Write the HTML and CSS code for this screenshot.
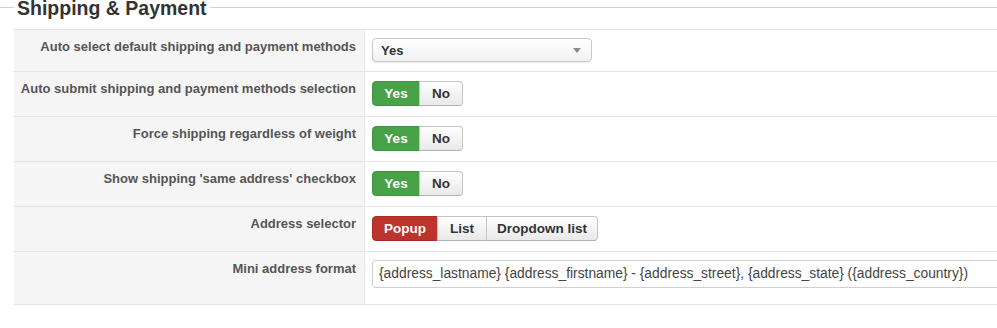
FILE: index.html
```html
<!DOCTYPE html>
<html>
<head>
<meta charset="utf-8">
<link rel="stylesheet" href="styles.css">
</head>
<body>
<div class="fieldset">
  <div class="legend-row">
    <div class="legend-line short"></div>
    <div class="legend">Shipping &amp; Payment</div>
    <div class="legend-line grow"></div>
  </div>
  <div class="form">
    <div class="row r1">
      <div class="label">Auto select default shipping and payment methods</div>
      <div class="value">
        <div class="select"><span>Yes</span><span class="caret"></span></div>
      </div>
    </div>
    <div class="row">
      <div class="label">Auto submit shipping and payment methods selection</div>
      <div class="value">
        <div class="btn-group"><span class="btn green w-yes">Yes</span><span class="btn w-no">No</span></div>
      </div>
    </div>
    <div class="row">
      <div class="label">Force shipping regardless of weight</div>
      <div class="value">
        <div class="btn-group"><span class="btn green w-yes">Yes</span><span class="btn w-no">No</span></div>
      </div>
    </div>
    <div class="row">
      <div class="label">Show shipping 'same address' checkbox</div>
      <div class="value">
        <div class="btn-group"><span class="btn green w-yes">Yes</span><span class="btn w-no">No</span></div>
      </div>
    </div>
    <div class="row">
      <div class="label">Address selector</div>
      <div class="value">
        <div class="btn-group"><span class="btn red w-popup">Popup</span><span class="btn w-list">List</span><span class="btn w-dd">Dropdown list</span></div>
      </div>
    </div>
    <div class="row r6">
      <div class="label">Mini address format</div>
      <div class="value">
        <div class="input">{address_lastname} {address_firstname} - {address_street}, {address_state} ({address_country})</div>
      </div>
    </div>
  </div>
</div>
</body>
</html>
```
FILE: styles.css
```css
html, body {
  margin: 0;
  padding: 0;
  background: #fff;
  overflow: hidden;
}
body {
  font-family: "Liberation Sans", Arial, Helvetica, sans-serif;
  font-size: 13px;
  color: #333;
  width: 997px;
}
.legend-row {
  display: flex;
  height: 16px;
  margin-bottom: 13px;
}
.legend-line {
  height: 1px;
  background: #cfcfcf;
  margin-top: 7px;
}
.legend-line.short { width: 14px; }
.legend-line.grow { flex: 1; }
.legend {
  font-size: 19.5px;
  line-height: 16px;
  font-weight: bold;
  color: #333;
  padding: 0 3px;
  white-space: nowrap;
}
.form {
  margin-left: 14px;
  border-bottom: 1px solid #e3e3e3;
}
.row {
  display: grid;
  grid-template-columns: 351px 1fr;
  border-top: 1px solid #e3e3e3;
  height: 44px;
}
.row.r1 { height: 41px; }
.row.r6 { height: 52px; }
.label {
  background: #f5f5f5;
  border-right: 1px solid #e8e8e8;
  text-align: right;
  font-weight: bold;
  color: #555;
  line-height: 18px;
  padding: 8px 8px 0 0;
  white-space: nowrap;
}
.value {
  padding: 9px 0 0 7px;
  overflow: hidden;
  min-width: 0;
}
.r1 .value { padding-top: 8px; }
.r6 .value { padding-top: 8px; }
.select {
  box-sizing: border-box;
  width: 220px;
  height: 24px;
  border: 1px solid #c8c8c8;
  border-radius: 4px;
  background: linear-gradient(#ffffff, #f1f1f1);
  box-shadow: 0 1px 1px rgba(0,0,0,0.08);
  display: flex;
  align-items: center;
  justify-content: space-between;
  padding: 0 10px 0 8px;
  font-weight: bold;
  color: #333;
}
.caret {
  width: 0;
  height: 0;
  border-left: 4px solid transparent;
  border-right: 4px solid transparent;
  border-top: 5px solid #8a8a8a;
}
.btn-group {
  display: flex;
}
.btn {
  box-sizing: border-box;
  height: 25px;
  line-height: 23px;
  text-align: center;
  font-weight: bold;
  font-size: 13.5px;
  color: #333;
  border: 1px solid #c5c5c5;
  border-bottom-color: #b3b3b3;
  background: linear-gradient(#ffffff, #e9e9e9);
  margin-left: -1px;
}
.btn:first-child {
  margin-left: 0;
  border-radius: 4px 0 0 4px;
}
.btn:last-child {
  border-radius: 0 4px 4px 0;
}
.btn.green {
  background: #48a248;
  border-color: #3f923f;
  color: #fff;
}
.btn.red {
  background: #bd342d;
  border-color: #a52b25;
  color: #fff;
}
.w-yes { width: 48px; }
.w-no { width: 44px; }
.w-popup { width: 66px; }
.w-list { width: 50px; }
.w-dd { width: 112px; }
.input {
  box-sizing: border-box;
  width: 660px;
  height: 28px;
  border: 1px solid #cfcfcf;
  border-radius: 3px;
  padding: 0 6px;
  line-height: 26px;
  font-size: 13.8px;
  color: #444;
  white-space: nowrap;
  background: #fff;
}
```
